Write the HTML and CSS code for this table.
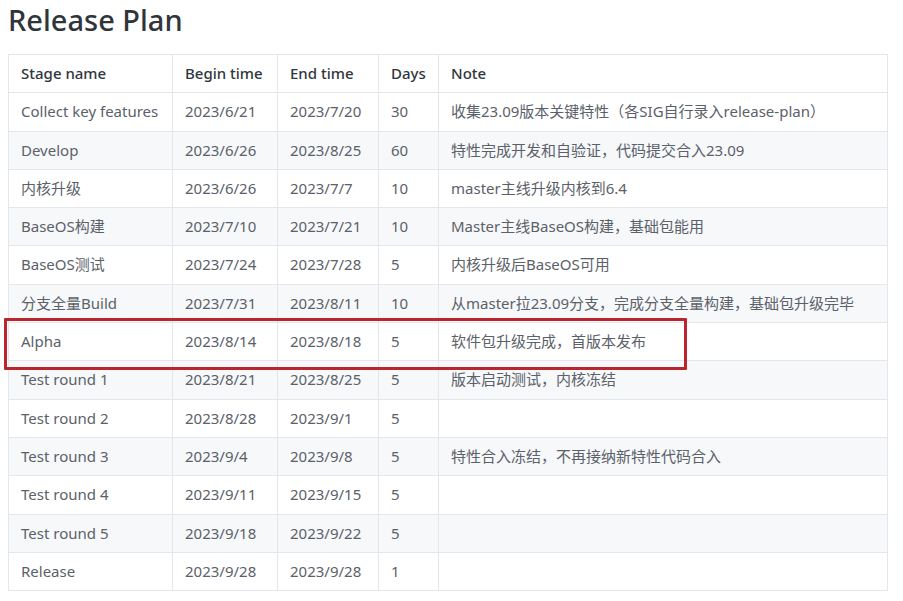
FILE: index.html
```html
<!DOCTYPE html>
<html lang="zh-CN">
<head>
<meta charset="utf-8">
<title>Release Plan</title>
<link rel="stylesheet" href="styles.css">
</head>
<body>
<h1 class="title">Release Plan</h1>
<div class="table-wrap">
<table class="plan">
<colgroup>
<col class="c-stage"><col class="c-begin"><col class="c-end"><col class="c-days"><col class="c-note">
</colgroup>
<thead>
<tr><th>Stage name</th><th>Begin time</th><th>End time</th><th>Days</th><th>Note</th></tr>
</thead>
<tbody>
<tr><td>Collect key features</td><td>2023/6/21</td><td>2023/7/20</td><td>30</td><td>收集23.09版本关键特性（各SIG自行录入release-plan）</td></tr>
<tr><td>Develop</td><td>2023/6/26</td><td>2023/8/25</td><td>60</td><td>特性完成开发和自验证，代码提交合入23.09</td></tr>
<tr><td>内核升级</td><td>2023/6/26</td><td>2023/7/7</td><td>10</td><td>master主线升级内核到6.4</td></tr>
<tr><td>BaseOS构建</td><td>2023/7/10</td><td>2023/7/21</td><td>10</td><td>Master主线BaseOS构建，基础包能用</td></tr>
<tr><td>BaseOS测试</td><td>2023/7/24</td><td>2023/7/28</td><td>5</td><td>内核升级后BaseOS可用</td></tr>
<tr><td>分支全量Build</td><td>2023/7/31</td><td>2023/8/11</td><td>10</td><td>从master拉23.09分支，完成分支全量构建，基础包升级完毕</td></tr>
<tr><td>Alpha</td><td>2023/8/14</td><td>2023/8/18</td><td>5</td><td>软件包升级完成，首版本发布</td></tr>
<tr><td>Test round 1</td><td>2023/8/21</td><td>2023/8/25</td><td>5</td><td>版本启动测试，内核冻结</td></tr>
<tr><td>Test round 2</td><td>2023/8/28</td><td>2023/9/1</td><td>5</td><td></td></tr>
<tr><td>Test round 3</td><td>2023/9/4</td><td>2023/9/8</td><td>5</td><td>特性合入冻结，不再接纳新特性代码合入</td></tr>
<tr><td>Test round 4</td><td>2023/9/11</td><td>2023/9/15</td><td>5</td><td></td></tr>
<tr><td>Test round 5</td><td>2023/9/18</td><td>2023/9/22</td><td>5</td><td></td></tr>
<tr><td>Release</td><td>2023/9/28</td><td>2023/9/28</td><td>1</td><td></td></tr>
</tbody>
</table>
<div class="highlight"></div>
</div>
</body>
</html>
```
FILE: styles.css
```css
html, body {
  margin: 0;
  padding: 0;
  background: #ffffff;
}
body {
  padding: 0 8px;
  font-family: "Noto Sans", "Noto Sans CJK SC", sans-serif;
  color: #5b6169;
}
.title {
  margin: 2px 0 16px 0;
  font-size: 29px;
  line-height: 36px;
  font-weight: 500;
  color: #30353b;
}
.table-wrap {
  position: relative;
  width: 879px;
}
.plan {
  border-collapse: collapse;
  table-layout: fixed;
  width: 879px;
  font-size: 15px;
  line-height: 21.3px;
}
.c-stage { width: 164px; }
.c-begin { width: 105px; }
.c-end { width: 101px; }
.c-days { width: 60px; }
.c-note { width: 449px; }
.plan th, .plan td {
  border: 1px solid #e3e6ea;
  padding: 8px 12px;
  text-align: left;
  white-space: nowrap;
  overflow: hidden;
}
.plan th {
  font-weight: 500;
  color: #30363d;
}
.plan tbody tr:nth-child(even) {
  background: #f6f8fa;
}
.highlight {
  position: absolute;
  left: -4px;
  top: 264px;
  width: 677px;
  height: 46px;
  border: 3px solid #b9262d;
  border-radius: 1px;
}
```
